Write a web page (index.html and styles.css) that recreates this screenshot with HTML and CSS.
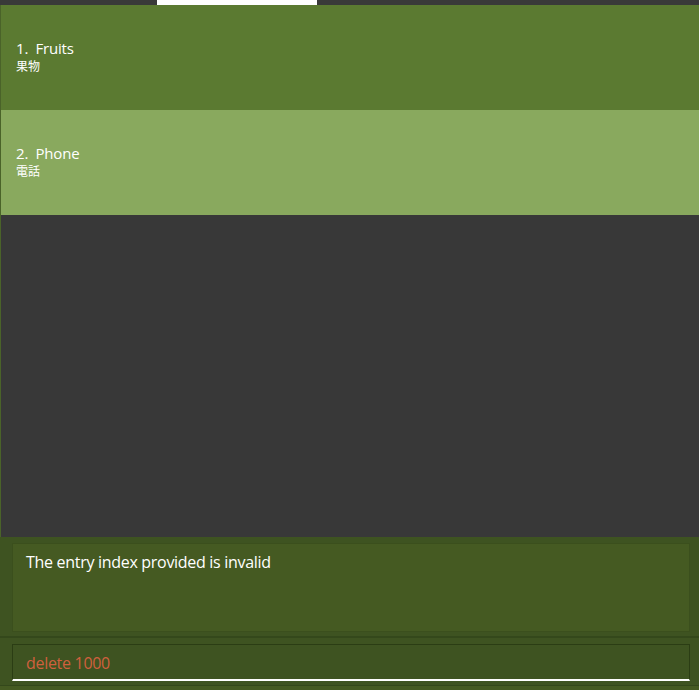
FILE: index.html
```html
<!DOCTYPE html>
<html>
<head>
<meta charset="utf-8">
<link rel="stylesheet" href="styles.css">
</head>
<body>
<div class="app">
  <div class="tabs"><div class="tab-active"></div></div>
  <div class="list">
    <div class="cell cell-odd">
      <div class="title">1.&nbsp; Fruits</div>
      <div class="sub">果物</div>
    </div>
    <div class="cell cell-even">
      <div class="title">2.&nbsp; Phone</div>
      <div class="sub">電話</div>
    </div>
  </div>
  <div class="result-pane">
    <div class="result-box">The entry index provided is invalid</div>
  </div>
  <div class="command-pane">
    <div class="command-box">delete 1000</div>
  </div>
</div>
</body>
</html>
```
FILE: styles.css
```css
html, body {
  margin: 0;
  padding: 0;
  background: #455a22;
}
.app {
  width: 699px;
  height: 690px;
  display: flex;
  flex-direction: column;
  font-family: "Open Sans", "Noto Sans CJK JP", sans-serif;
  color: #ffffff;
}
.tabs {
  height: 5px;
  background: #393939;
  display: flex;
}
.tab-active {
  margin-left: 157px;
  width: 160px;
  background: #ffffff;
}
.list {
  height: 532px;
  background: #383838;
  border-left: 1px solid #4a6329;
  display: flex;
  flex-direction: column;
}
.cell {
  height: 105px;
  display: flex;
  flex-direction: column;
  justify-content: center;
  padding-left: 15px;
  padding-bottom: 3px;
  box-sizing: border-box;
}
.cell-odd { background: #5b7a31; }
.cell-even { background: #89a95e; }
.title {
  font-size: 15px;
  line-height: 19px;
  letter-spacing: -0.2px;
}
.sub {
  font-size: 12px;
  line-height: 16px;
  font-family: "Noto Sans CJK JP", sans-serif;
}
.result-pane {
  background: #3e5321;
  padding: 6px 9px 4px 12px;
  border-bottom: 2px solid #34481b;
}
.result-box {
  height: 89px;
  background: #455a22;
  border: 1px solid #3b4f1d;
  padding: 8px 13px;
  box-sizing: border-box;
  font-size: 16px;
  line-height: 20px;
  letter-spacing: -0.3px;
}
.command-pane {
  background: #3e5321;
  padding: 6px 9px 4px 12px;
  border-bottom: 1px solid #34481b;
}
.command-box {
  height: 37px;
  box-sizing: border-box;
  border: 1px solid #2b3d14;
  border-bottom: 2px solid #ffffff;
  padding: 7px 13px;
  font-size: 16px;
  line-height: 22px;
  color: #d0603e;
  letter-spacing: -0.3px;
}
```
